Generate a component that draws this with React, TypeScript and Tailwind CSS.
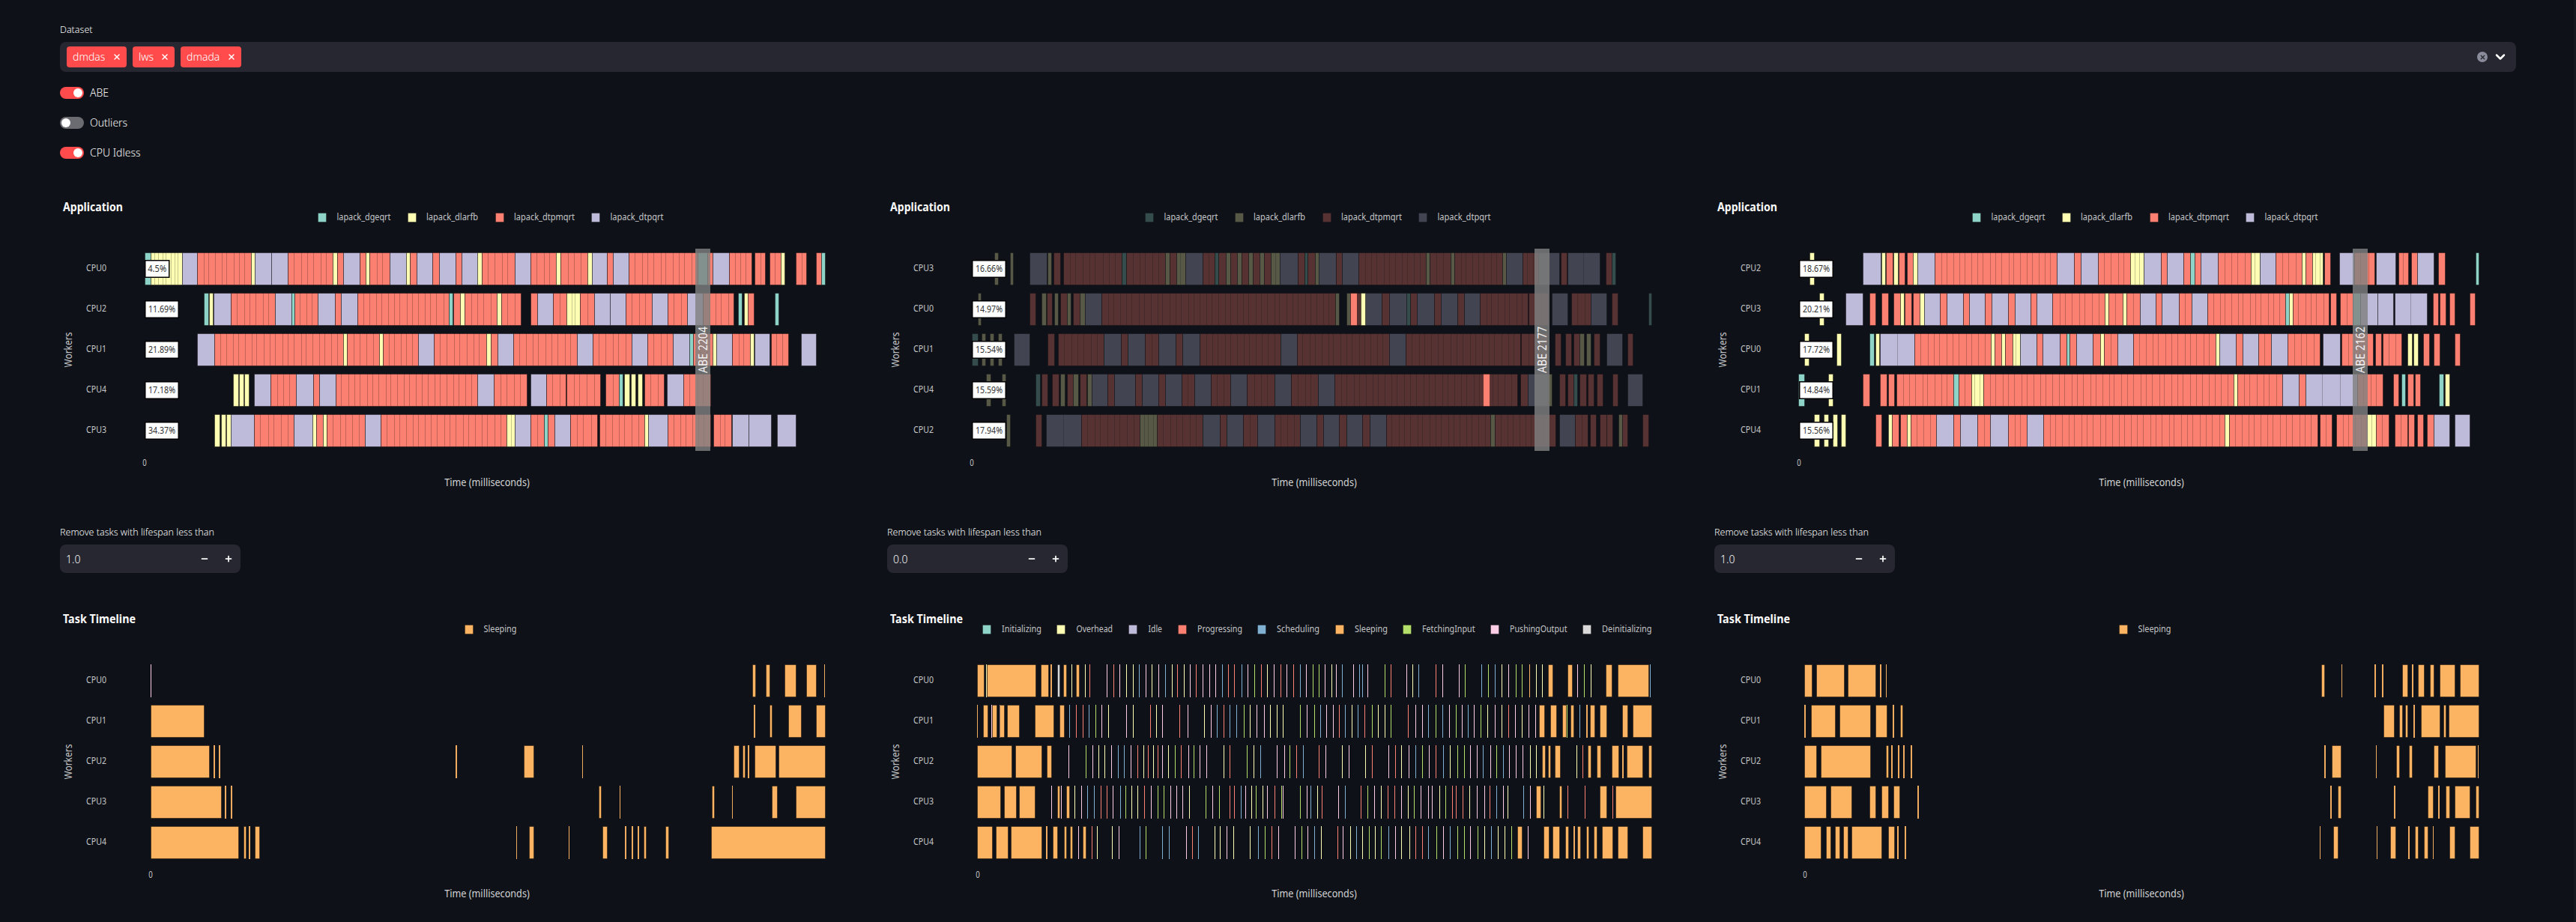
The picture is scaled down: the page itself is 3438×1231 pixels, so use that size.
import React from "react";
import { X, ChevronDown, Minus, Plus } from "lucide-react";

const COL: Record<string, string> = {
  T: "#8dd3c7", Y: "#ffffb3", R: "#fb8072", P: "#bebada", B: "#80b1d3",
  O: "#fdb462", G: "#b3de69", K: "#fccde5", W: "#d9d9d9",
};
const SCALE = 1568 / 1060;
const DX = [-20, -24, -28];
const THIN = "KYKBKYRKG";

type Row = { cpu: string; pct?: string; data: string };

const parse = (s: string) =>
  s.trim().split(/\s+/).map((t) => {
    const m = t.match(/^([A-Za-z])(\d+)(?:-(\d+))?$/)!;
    return { c: m[1], a: +m[2], b: m[3] ? +m[3] : null };
  });

function Txt(p: {
  x: number; y: number; w?: number; size: number; fill: string; bold?: boolean;
  anchor?: "start" | "middle"; rotate?: boolean; children: string; opacity?: number;
}) {
  const y = p.rotate ? p.y : p.y - 1.5;
  return (
    <text
      x={p.x}
      y={y}
      fill={p.fill}
      fontSize={p.size}
      fontWeight={p.bold ? 700 : 400}
      textAnchor={p.anchor ?? "start"}
      dominantBaseline="central"
      textLength={p.w}
      lengthAdjust={p.w ? "spacingAndGlyphs" : undefined}
      opacity={p.opacity}
      transform={p.rotate ? `rotate(-90 ${p.x} ${y})` : undefined}
    >
      {p.children}
    </text>
  );
}

function Bars({ data, y, h, dx }: { data: string; y: number; h: number; dx: number }) {
  const out: React.ReactNode[] = [];
  let wi = 0;
  parse(data).forEach((s, i) => {
    if (s.b === null) {
      const x = Math.round(s.a / SCALE + dx);
      const c = s.c === "W" ? COL[THIN[wi++ % THIN.length]] : COL[s.c];
      out.push(<rect key={i} x={x} y={y} width={1} height={h + 1} fill={c} />);
      return;
    }
    const x0 = Math.round(s.a / SCALE + dx);
    const x1 = Math.round(s.b / SCALE + dx);
    const w = Math.max(x1 - x0, 1);
    if (w < 3) {
      out.push(<rect key={i} x={x0} y={y} width={w} height={h + 1} fill={COL[s.c]} opacity={0.95} />);
      return;
    }
    const pitch = s.c === "R" ? 8.3 : s.c === "Y" ? 5.6 : s.c === "P" ? 22 : 0;
    const n = pitch ? Math.max(1, Math.round(w / pitch)) : 1;
    const lines: React.ReactNode[] = [];
    for (let k = 1; k < n; k++) {
      const lx = Math.round(x0 + (w * k) / n + Math.sin(k * 2.3 + s.a) * 0.9) + 0.5;
      lines.push(<line key={k} x1={lx} x2={lx} y1={y} y2={y + h} stroke="#000" strokeOpacity={0.22} />);
    }
    out.push(
      <g key={i}>
        <rect x={x0 + 0.5} y={y + 0.5} width={w} height={h} fill={COL[s.c]} stroke="#000" strokeOpacity={0.4} />
        {lines}
      </g>,
    );
  });
  return <>{out}</>;
}

const APP_LEGEND: [string, string, number, number, number][] = [
  ["T", "lapack_dgeqrt", 343.5, 369.5, 72],
  ["Y", "lapack_dlarfb", 463.5, 489, 69],
  ["R", "lapack_dtpmqrt", 580.5, 606, 81],
  ["P", "lapack_dtpqrt", 709, 734.5, 71],
];

const ALL_LEGEND: [string, string, number, number, number][] = [
  ["T", "Initializing", 127, 153, 53],
  ["Y", "Overhead", 226, 252.5, 48.5],
  ["P", "Idle", 322, 348.5, 18.5],
  ["R", "Progressing", 388, 414, 60],
  ["B", "Scheduling", 494, 520, 57],
  ["O", "Sleeping", 597.5, 624, 44],
  ["G", "FetchingInput", 688, 714, 70.5],
  ["K", "PushingOutput", 805, 831, 76.5],
  ["W", "Deinitializing", 928, 954, 66.5],
];
const SLEEP_LEGEND: [string, string, number, number, number][] = [["O", "Sleeping", 539.5, 565.5, 44]];

function Legend({ items, y, dim }: { items: [string, string, number, number, number][]; y: number; dim?: boolean }) {
  return (
    <>
      {items.map(([c, label, sx, tx, w]) => (
        <g key={label}>
          <rect x={Math.round(sx) + 0.5} y={y - 6.5} width={11} height={12} fill={COL[c]} stroke="#000" strokeOpacity={0.3} opacity={dim ? 0.3 : 1} />
          <Txt x={tx} y={y} w={w} size={12} fill="#c4c5c7">{label}</Txt>
        </g>
      ))}
    </>
  );
}

function Axes({ wy, zeroX, zeroY, timeY }: { wy: number; zeroX: number; zeroY: number; timeY: number }) {
  return (
    <>
      <Txt x={10.5} y={wy} w={47} size={14} fill="#c4c5c7" anchor="middle" rotate>Workers</Txt>
      <Txt x={zeroX} y={zeroY} w={5.5} size={12} fill="#c4c5c7" anchor="middle">0</Txt>
      <Txt x={570} y={timeY} w={113.5} size={14} fill="#d2d3d4" anchor="middle">Time (milliseconds)</Txt>
    </>
  );
}

function AppChart({ idx, rows, abe, abeX, dim }: { idx: number; rows: Row[]; abe: string; abeX: number; dim?: boolean }) {
  const tops = [87, 141, 195, 249, 303];
  return (
    <svg width={1070} height={410} className="block">
      <Txt x={4} y={27} w={80} size={16} fill="#fafafa" bold>Application</Txt>
      <Legend items={APP_LEGEND} y={41} dim={dim} />
      {rows.map((r, i) => (
        <g key={r.cpu} opacity={dim ? 0.3 : 1}>
          <Bars data={r.data} y={tops[i]} h={43} dx={DX[idx]} />
        </g>
      ))}
      {dim && (
        <>
          <Bars data="R950-963 Y970-979" y={141} h={43} dx={DX[idx]} />
          <Bars data="R1212-1225" y={249} h={43} dx={DX[idx]} />
        </>
      )}
      {rows.map((r, i) => {
        const w = r.pct === "4.5%" ? 32 : 44.5;
        const cy = tops[i] + 22;
        return (
          <g key={r.cpu + "l"}>
            <Txt x={35} y={cy} w={27} size={12} fill="#c4c5c7">{r.cpu}</Txt>
            <rect x={113.75} y={cy - 11.25} width={w} height={22.5} fill="#fff" stroke="#000" strokeWidth={1.5} />
            <Txt x={113.75 + w / 2} y={cy + 0.5} w={r.pct === "4.5%" ? 25 : 36} size={12} fill="#333" anchor="middle">{r.pct!}</Txt>
          </g>
        );
      })}
      <rect x={abeX} y={82} width={20} height={270} fill="#808080" opacity={0.81} />
      <Txt x={abeX + 9.5} y={217} w={62} size={17} fill="#f2f2f2" anchor="middle" rotate>{abe}</Txt>
      <Axes wy={217} zeroX={113} zeroY={369} timeY={395} />
    </svg>
  );
}

function TaskChart({ idx, rows, all }: { idx: number; rows: Row[]; all?: boolean }) {
  const tops = [77, 131, 185, 239, 293];
  return (
    <svg width={1070} height={400} className="block">
      <Txt x={4} y={17} w={97} size={16} fill="#fafafa" bold>Task Timeline</Txt>
      <Legend items={all ? ALL_LEGEND : SLEEP_LEGEND} y={31} />
      {rows.map((r, i) => (
        <g key={r.cpu}>
          <Txt x={35} y={tops[i] + 22} w={27} size={12} fill="#c4c5c7">{r.cpu}</Txt>
          <Bars data={r.data} y={tops[i]} h={43} dx={DX[idx]} />
        </g>
      ))}
      <Axes wy={207} zeroX={121} zeroY={359} timeY={384} />
    </svg>
  );
}

const APP1: Row[] = [
  { cpu: "CPU0", pct: "4.5%", data: "T197-209 Y209-271 P271-301 R301-407 Y407-414 P414-446 P446-480 R480-568 Y568-577 R577-589 P589-621 R621-633 Y633-641 R641-680 P680-713 Y713-720 R720-733 P733-765 R765-778 P778-810 R810-822 P822-854 Y854-862 R862-927 P927-959 R959-1009 Y1009-1017 R1017-1071 Y1071-1080 P1080-1110 R1110-1122 P1122-1153 R1153-1288 T1288-1308 R1308-1318 P1318-1350 R1350-1395 R1401-1422 R1430-1453 Y1453-1460 R1482-1503 R1522-1532 T1532-1540" },
  { cpu: "CPU2", pct: "11.69%", data: "T313-322 Y324-332 P333-367 R367-454 P454-486 T486-493 R493-538 P538-572 R572-585 P585-617 R617-797 T797-804 R806-820 Y820-828 R828-892 Y892-901 R901-940 R959-972 P972-1003 R1003-1030 Y1030-1056 R1056-1084 P1084-1116 P1116-1147 R1147-1198 P1198-1229 R1229-1267 P1267-1299 R1299-1359 T1368-1376 Y1380-1388 R1388-1400 T1441-1448" },
  { cpu: "CPU1", pct: "21.89%", data: "P301-334 R334-589 Y589-596 R596-660 Y660-667 R667-736 P736-768 R768-872 Y872-880 R880-894 P894-925 R925-1051 P1051-1082 R1082-1158 P1158-1190 R1190-1240 P1240-1272 T1272-1280 R1280-1318 Y1318-1325 P1325-1357 R1357-1392 Y1392-1399 P1401-1430 R1434-1467 P1493-1522" },
  { cpu: "CPU4", pct: "17.18%", data: "Y371-382 Y383-392 Y394-403 P412-445 R445-496 P496-530 R530-542 P542-574 R574-854 P854-886 R886-951 P959-990 R990-1028 R1030-1096 R1106-1133 T1133-1141 Y1144-1154 Y1157-1166 Y1170-1179 R1184-1222 P1228-1260 R1260-1314" },
  { cpu: "CPU3", pct: "34.37%", data: "Y335-345 Y347-356 Y358-367 P367-412 R412-491 P491-528 Y528-536 R536-549 Y549-556 R556-632 P632-663 R663-911 Y911-927 P927-959 R959-985 T985-993 R993-1006 P1006-1037 R1037-1090 R1095-1183 Y1183-1191 P1191-1229 R1229-1314 R1319-1355 P1357-1389 P1389-1434 P1445-1482" },
];
const APP2: Row[] = [
  { cpu: "CPU3", pct: "16.66%", data: "Y247-254 Y278-284 P317-350 Y352-360 R364-377 R383-499 T499-507 R507-585 Y585-593 R593-606 Y606-624 P624-658 R658-682 T682-690 R690-704 Y704-713 R713-727 Y727-735 R735-748 Y748-757 R757-771 Y771-780 R780-793 Y793-811 P811-846 R846-859 T859-866 R866-880 Y880-888 P888-921 R921-934 P934-966 R966-1099 Y1099-1107 R1107-1148 Y1148-1156 R1156-1250 Y1250-1258 P1258-1290 R1290-1321 P1321-1362 R1365-1377 P1379-1443 R1454-1466 T1466-1474" },
  { cpu: "CPU0", pct: "14.97%", data: "Y214-221 R317-328 Y340-349 R350-361 Y365-373 R377-390 Y390-398 R403-415 Y415-426 P426-459 R459-920 Y920-928 Y942-950 R963-970 P979-1012 R1012-1027 P1027-1060 T1060-1068 R1068-1081 P1081-1115 R1115-1128 P1128-1161 R1161-1174 P1174-1206 R1206-1300 R1302-1340 P1348-1379 R1386-1424 P1424-1455 R1466-1478 T1538-1544" },
  { cpu: "CPU1", pct: "15.54%", data: "T202-214 Y222-230 Y238-246 Y254-262 P285-317 R352-365 R373-463 P463-497 R497-510 P510-544 R544-571 P571-605 R605-619 P619-652 R652-812 P812-845 R845-1027 P1027-1059 R1059-1285 R1287-1338 R1354-1365 R1374-1386 R1390-1402 Y1402-1411 Y1416-1424 R1430-1442 P1455-1487 R1497-1507" },
  { cpu: "CPU4", pct: "15.59%", data: "Y231-239 Y262-269 T328-337 R340-352 R361-374 Y377-386 R390-403 Y403-412 R416-429 Y430-439 P439-471 R471-484 P484-525 R525-538 P538-571 R571-584 P584-617 R617-642 P642-674 R674-713 P713-746 R746-800 P800-833 R833-886 P886-918 R918-1279 R1286-1300 P1300-1340 Y1340-1348 R1362-1374 R1379-1390 T1390-1398 R1402-1416 R1419-1431 R1436-1448 R1467-1478 P1497-1527" },
  { cpu: "CPU2", pct: "17.94%", data: "Y270-278 R328-340 P349-418 R418-534 Y534-568 R568-658 P658-692 R692-706 P706-738 R738-766 P766-800 R800-851 P851-883 R883-896 P896-928 R928-942 P942-974 R974-988 P988-1021 R1021-1226 Y1226-1235 R1235-1355 P1362-1394 R1394-1419 R1423-1435 R1443-1455 R1456-1467 Y1479-1486 R1486-1497 R1527-1538" },
];
const APP3: Row[] = [
  { cpu: "CPU2", pct: "18.67%", data: "Y229-238 P335-370 Y371-379 R380-393 Y395-404 R405-417 R421-433 Y433-442 P442-477 R477-718 P718-752 R752-765 P765-799 R799-862 Y862-889 P889-923 R923-935 P935-968 R968-980 T980-989 R989-1002 P1002-1035 R1035-1101 Y1101-1118 P1118-1150 R1150-1201 Y1201-1209 R1209-1222 Y1222-1243 R1246-1258 P1275-1304 R1304-1345 P1348-1386 R1392-1411 R1417-1429 P1429-1461 R1471-1484 T1544-1550" },
  { cpu: "CPU3", pct: "20.21%", data: "Y248-257 P300-335 R348-359 R371-384 R395-408 Y408-416 R417-430 R433-447 Y447-455 P455-487 P500-532 R487-500 R532-544 P544-576 R576-589 P589-621 R621-634 P634-666 R666-678 P678-709 R709-812 Y812-820 R820-847 Y847-855 R855-881 P881-913 R913-925 P925-958 R958-983 P983-1015 R1015-1168 T1168-1176 Y1176-1184 R1184-1254 R1258-1269 R1276-1301 T1301-1316 P1316-1350 P1350-1381 P1385-1448 R1460-1471 R1473-1485 R1493-1503 R1533-1543" },
  { cpu: "CPU0", pct: "17.72%", data: "Y219-228 Y283-291 T348-356 Y359-367 P368-436 R436-587 Y587-595 R595-608 Y608-616 R616-630 Y630-645 P645-678 R678-690 P690-723 R723-736 T736-743 R743-756 P756-789 R789-803 Y803-811 R811-837 P837-869 R869-1031 Y1031-1038 P1038-1071 R1071-1084 P1084-1116 R1116-1141 P1141-1173 R1173-1236 P1242-1276 R1280-1342 R1346-1358 R1361-1398 Y1409-1418 Y1422-1430 R1441-1452 R1461-1473 R1503-1514" },
  { cpu: "CPU1", pct: "14.84%", data: "T207-219 Y266-275 R335-348 R369-381 R384-396 R401-514 T514-523 R523-549 Y549-572 R572-1066 Y1066-1074 R1074-1163 P1163-1195 R1195-1208 P1208-1310 R1310-1361 R1381-1392 T1398-1405 R1410-1422 R1424-1435 T1472-1480 Y1484-1492" },
  { cpu: "CPU4", pct: "15.56%", data: "Y238-248 Y257-266 Y275-284 Y291-300 R359-371 Y384-392 R392-405 R408-421 Y421-429 R429-480 P480-514 R514-527 P527-560 R560-586 P586-621 R621-658 P658-691 R691-1049 Y1049-1057 R1057-1232 R1236-1261 R1269-1330 Y1330-1348 R1348-1373 R1385-1409 R1411-1423 R1429-1441 R1448-1461 P1461-1493 P1503-1533" },
];

const T1: Row[] = [
  { cpu: "CPU0", data: "W209 O1396-1402 O1423-1431 O1460-1482 O1503-1522 O1538-1540" },
  { cpu: "CPU1", data: "O209-314 O1400-1402 O1431-1435 O1467-1493 O1522-1540" },
  { cpu: "CPU2", data: "O209-324 O333-336 O343-346 O810-813 O945-964 O1060-1062 O1359-1370 O1377-1381 O1388-1390 O1401-1442 O1448-1540" },
  { cpu: "CPU3", data: "O209-347 O355-358 O367-370 O1093-1098 O1135 O1316-1321 O1356-1358 O1435-1445 O1482-1540" },
  { cpu: "CPU4", data: "O209-382 O392-396 O402-406 O414-423 O930-932 O956-964 O1034 O1101-1110 O1145-1148 O1158-1161 O1170-1173 O1182-1187 O1225-1231 O1315-1540" },
];
const T3: Row[] = [
  { cpu: "CPU0", data: "O219-233 O242-297 O304-360 O368-372 O380-382 O1239-1245 O1279-1281 O1344-1348 O1360-1362 O1399-1410 O1419-1422 O1430-1442 O1454-1461 O1473-1503 O1514-1550" },
  { cpu: "CPU1", data: "O219-222 O232-280 O288-349 O360-381 O393-396 O408-413 O1363-1383 O1394-1399 O1406-1410 O1422-1425 O1436-1474 O1480-1485 O1491-1550" },
  { cpu: "CPU2", data: "O219-243 O251-349 O380-384 O391-393 O404-407 O414-417 O429-432 O1245-1248 O1260-1278 O1347-1349 O1387-1393 O1412-1418 O1461-1471 O1484-1544 O1549-1550" },
  { cpu: "CPU3", data: "O219-262 O271-312 O348-360 O371-384 O395-407 O442-445 O1257-1260 O1272-1278 O1383-1386 O1449-1460 O1471-1473 O1485-1493 O1503-1532 O1544-1550" },
  { cpu: "CPU4", data: "O219-252 O262-271 O279-288 O296-304 O312-372 O384-396 O403-405 O417-420 O1236-1238 O1263-1272 O1349-1351 O1375-1386 O1411-1414 O1424-1430 O1442-1449 O1460-1461 O1493-1503 O1532-1550" },
];
const T2: Row[] = [
  { cpu: "CPU0", data: "O213-226 Y231 O232-328 O339-353 O358-361 W371-376 O383-389 Y399 O408-414 Y426 R435 K469 R482 K494 Y507 Y520 B533 K546 Y558 K571 B584 Y597 R608 Y621 K633 R645 K658 K671 K684 B696 R708 R721 B735 K747 G760 R773 Y786 K799 R812 K824 R837 B850 K862 G876 G888 W900 W913 W921 B934 K955 B967 W973 K984 G1017 R1030 W1061 W1072 B1085 W1118 K1131 W1164 W1176 B1208 G1222 B1235 Y1248 W1262 G1276 G1289 O1303 W1316 Y1329 O1340-1349 O1379-1387 W1398 G1411 Y1424 O1454-1466 O1478-1538 W1542" },
  { cpu: "CPU1", data: "O213-214 O225-234 K241 O242-251 K257 O258-267 O272-296 O327-364 O375-385 B395 R408 R421 B433 G446 K459 Y472 K507 Y520 R554 Y567 K579 R613 K628 Y661 K674 B686 R699 B712 B725 G739 Y751 K765 W779 Y792 Y804 W817 G851 W864 G878 W890 K903 W915 R927 B940 W952 B965 W978 G992 Y1004 Y1017 G1030 R1063 K1078 W1091 B1104 G1118 B1131 K1145 W1158 K1170 B1182 W1194 G1207 Y1221 K1235 W1248 R1262 K1275 Y1288 K1301 W1315 O1323-1333 O1344-1356 O1368-1376 G1377 O1385-1391 B1402 O1415-1418 O1423-1432 O1442-1456 O1486-1497 O1507-1544" },
  { cpu: "CPU2", data: "O213-281 O288-340 O351-360 K393 G428 W441 W453 Y465 W478 B491 W503 W516 R530 Y542 R551 W561 R569 K578 Y590 G603 W616 W630 W641 K653 W666 Y699 R712 G746 W759 B772 W805 K819 G830 R843 W856 R888 W901 W933 K947 Y979 R992 K1025 W1038 Y1051 W1065 B1079 W1092 W1105 R1119 B1133 W1146 G1161 G1174 W1187 K1200 W1212 K1227 G1238 B1252 W1263 K1277 K1290 Y1304 Y1317 O1329-1334 O1340-1345 O1353-1364 W1396 W1408 O1419-1425 O1436-1444 O1466-1479 O1486-1489 O1496-1527 O1538-1544" },
  { cpu: "CPU3", data: "O213-259 O266-290 O296-327 K360 O371-376 W379 O389-395 W406 W418 B431 W444 R457 R469 W481 B495 G506 Y517 W530 W543 W556 G569 W581 K594 K606 W618 W631 G664 W677 G691 R711 R720 W734 W743 Y755 G763 W777 K786 W800 G813 W817 W851 W864 B872 W885 R894 W926 W939 R971 G984 W997 W1010 R1023 W1037 W1050 Y1063 W1076 K1089 W1103 K1111 Y1125 G1138 R1151 R1158 R1172 W1185 K1199 W1214 R1225 W1238 K1252 Y1261 B1292 W1304 O1317-1325 W1331 O1362-1367 R1378 R1412 O1442-1455 W1468 O1473-1544" },
  { cpu: "CPU4", data: "O213-243 O250-274 O280-340 O349-352 O362-372 O384-389 O396-401 W413 O422-428 R439 W450 Y480 W493 B534 G546 B578 W592 K625 R637 B649 Y682 Y693 W706 W719 Y752 B767 G781 W794 K807 W840 W853 W866 B878 W892 R924 W935 Y949 B961 Y974 G986 Y998 G1011 W1025 W1038 W1051 Y1066 R1079 W1091 B1104 G1120 W1133 B1147 W1161 G1175 W1187 G1201 Y1215 B1228 W1241 Y1254 G1267 O1280-1288 W1300 O1332-1342 O1349-1363 O1374-1380 O1390-1394 O1398-1404 O1416-1420 O1431-1436 O1447-1467 O1478-1497 O1527-1544" },
];

function Toggle({ on, label }: { on: boolean; label: string }) {
  return (
    <div className="flex items-center gap-2 h-4">
      <div className={`w-8 h-4 rounded-full flex items-center px-[2px] ${on ? "bg-[#ff4b4b] justify-end" : "bg-[#6b6c72] justify-start"}`}>
        <div className="w-3 h-3 rounded-full bg-white" />
      </div>
      <span className="text-[14px] leading-4 text-[#fafafa] font-light">{label}</span>
    </div>
  );
}

function Tag({ label, w }: { label: string; w: string }) {
  return (
    <div className={`h-7 ${w} rounded bg-[#ff4b4b] text-white flex items-center justify-between pl-2 pr-[7px]`}>
      <span className="text-[14px] leading-none font-light">{label}</span>
      <X size={12} strokeWidth={3} />
    </div>
  );
}

function Stepper({ value }: { value: string }) {
  return (
    <>
      <div className="text-[12.5px] leading-4 mb-2 text-[#fafafa] font-light mt-[43px]">Remove tasks with lifespan less than</div>
      <div className="w-[241px] h-[38px] rounded-lg bg-[#262730] flex items-center pl-2 text-[#fafafa]">
        <span className="text-[14px] flex-1 font-light">{value}</span>
        <span className="w-8 flex justify-center"><Minus size={12} strokeWidth={3.5} /></span>
        <span className="w-8 flex justify-center"><Plus size={12} strokeWidth={3.5} /></span>
      </div>
    </>
  );
}

export default function App() {
  return (
    <div className="relative min-h-[1231px] h-[1231px] overflow-hidden bg-[#0e1117] pl-[80px] pr-[80px] pt-8 text-[#fafafa] [font-family:'Noto_Sans',sans-serif]">
      <div className="text-[12.5px] leading-4 mb-2 font-light">Dataset</div>
      <div className="h-10 rounded-lg bg-[#262730] flex items-center pl-[9px] pr-[11px]">
        <div className="flex gap-2 flex-1">
          <Tag label="dmdas" w="w-[80px]" />
          <Tag label="lws" w="w-[56px]" />
          <Tag label="dmada" w="w-[81px]" />
        </div>
        <div className="w-[14px] h-[14px] rounded-full bg-[#8b8c9b] flex items-center justify-center mr-[7px]">
          <X size={9} strokeWidth={3.5} className="text-[#262730]" />
        </div>
        <ChevronDown size={20} strokeWidth={3} className="text-white" />
      </div>
      <div className="flex flex-col gap-6 mt-5">
        <Toggle on label="ABE" />
        <Toggle on={false} label="Outliers" />
        <Toggle on label="CPU Idless" />
      </div>
      <div className="grid grid-cols-3 gap-x-[34px] mt-[38px]">
        <div>
          <AppChart idx={0} rows={APP1} abe="ABE 2204" abeX={848} />
          <Stepper value="1.0" />
          <div className="mt-[45px]"><TaskChart idx={0} rows={T1} /></div>
        </div>
        <div>
          <AppChart idx={1} rows={APP2} abe="ABE 2177" abeX={864} dim />
          <Stepper value="0.0" />
          <div className="mt-[45px]"><TaskChart idx={1} rows={T2} all /></div>
        </div>
        <div>
          <AppChart idx={2} rows={APP3} abe="ABE 2162" abeX={852} />
          <Stepper value="1.0" />
          <div className="mt-[45px]"><TaskChart idx={2} rows={T3} /></div>
        </div>
      </div>
      <div className="absolute top-0 right-0 bottom-0 w-[3px] bg-white/[0.03]" />
    </div>
  );
}
